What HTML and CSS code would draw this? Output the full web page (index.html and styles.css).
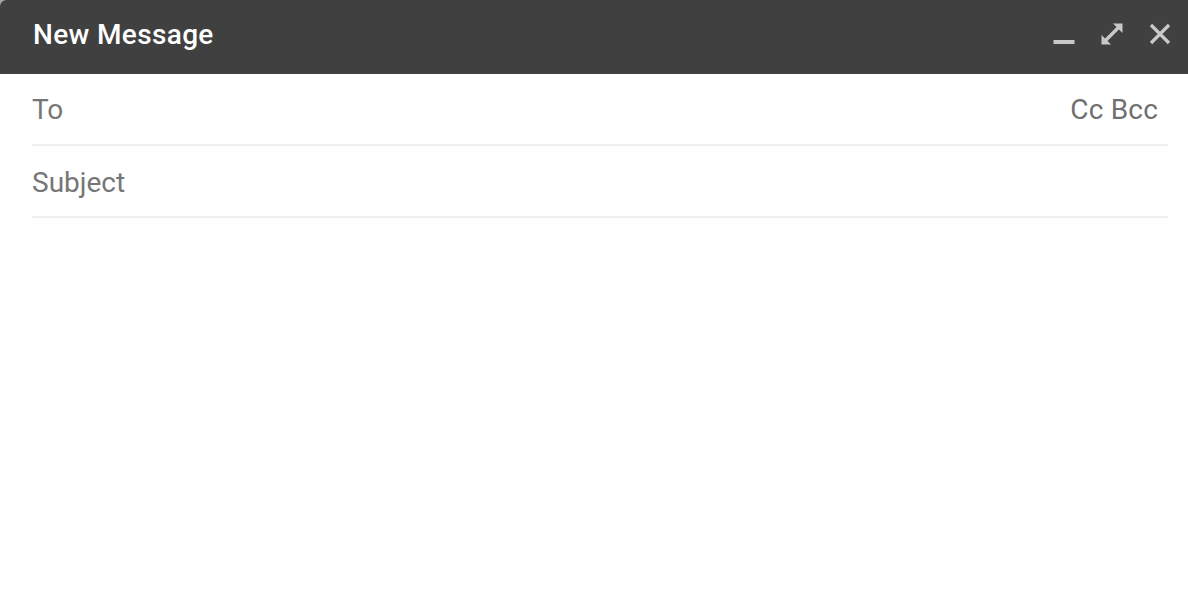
FILE: index.html
```html
<!DOCTYPE html>
<html lang="en">
<head>
<meta charset="utf-8">
<title>New Message</title>
<link rel="stylesheet" href="styles.css">
</head>
<body>
<div class="compose">
  <header class="compose-header">
    <h1 class="compose-title">New Message</h1>
    <div class="compose-actions">
      <svg class="icon" width="22" height="22" viewBox="0 0 22 22" aria-label="Minimize"><rect x="0.5" y="17" width="21" height="4" fill="currentColor"/></svg>
      <svg class="icon" width="22" height="22" viewBox="0 0 22 22" aria-label="Full screen"><polygon points="12,0.5 21.5,0.5 21.5,10" fill="currentColor"/><polygon points="0.5,12 0.5,21.5 10,21.5" fill="currentColor"/><line x1="4.5" y1="17.5" x2="17.5" y2="4.5" stroke="currentColor" stroke-width="3.4"/></svg>
      <svg class="icon" width="22" height="22" viewBox="0 0 22 22" aria-label="Close"><path d="M2 2L20 20M20 2L2 20" stroke="currentColor" stroke-width="3.3" fill="none"/></svg>
    </div>
  </header>
  <div class="compose-fields">
    <div class="field-row">
      <span class="field-label">To</span>
      <span class="field-extra">Cc Bcc</span>
    </div>
    <div class="field-row field-row-subject">
      <span class="field-label">Subject</span>
    </div>
  </div>
  <div class="compose-body"></div>
</div>
</body>
</html>
```
FILE: styles.css
```css
html {
  background: #a8a8a8;
}
body {
  margin: 0;
  font-family: Roboto, "Liberation Sans", Arial, sans-serif;
}
.compose {
  background: #ffffff;
  min-height: 100vh;
  border-top-left-radius: 6px;
  overflow: hidden;
}
.compose-header {
  height: 74px;
  box-sizing: border-box;
  background: #404040;
  display: flex;
  align-items: center;
  justify-content: space-between;
  padding: 0 17px 6px 33px;
}
.compose-title {
  margin: 0;
  font-size: 28px;
  font-weight: 500;
  color: #ffffff;
  letter-spacing: 0.35px;
}
.compose-actions {
  display: flex;
  align-items: center;
  gap: 26px;
  color: #c8c8c8;
}
.icon {
  display: block;
}
.compose-fields {
  padding: 0 20px 0 32px;
}
.field-row {
  height: 72px;
  box-sizing: border-box;
  border-bottom: 2px solid #efefef;
  display: flex;
  align-items: center;
  justify-content: space-between;
  font-size: 28px;
  color: #767676;
}
.field-row-subject {
  padding-top: 3px;
}
.field-extra {
  margin-right: 10px;
  color: #707070;
  letter-spacing: 0.2px;
}
```
